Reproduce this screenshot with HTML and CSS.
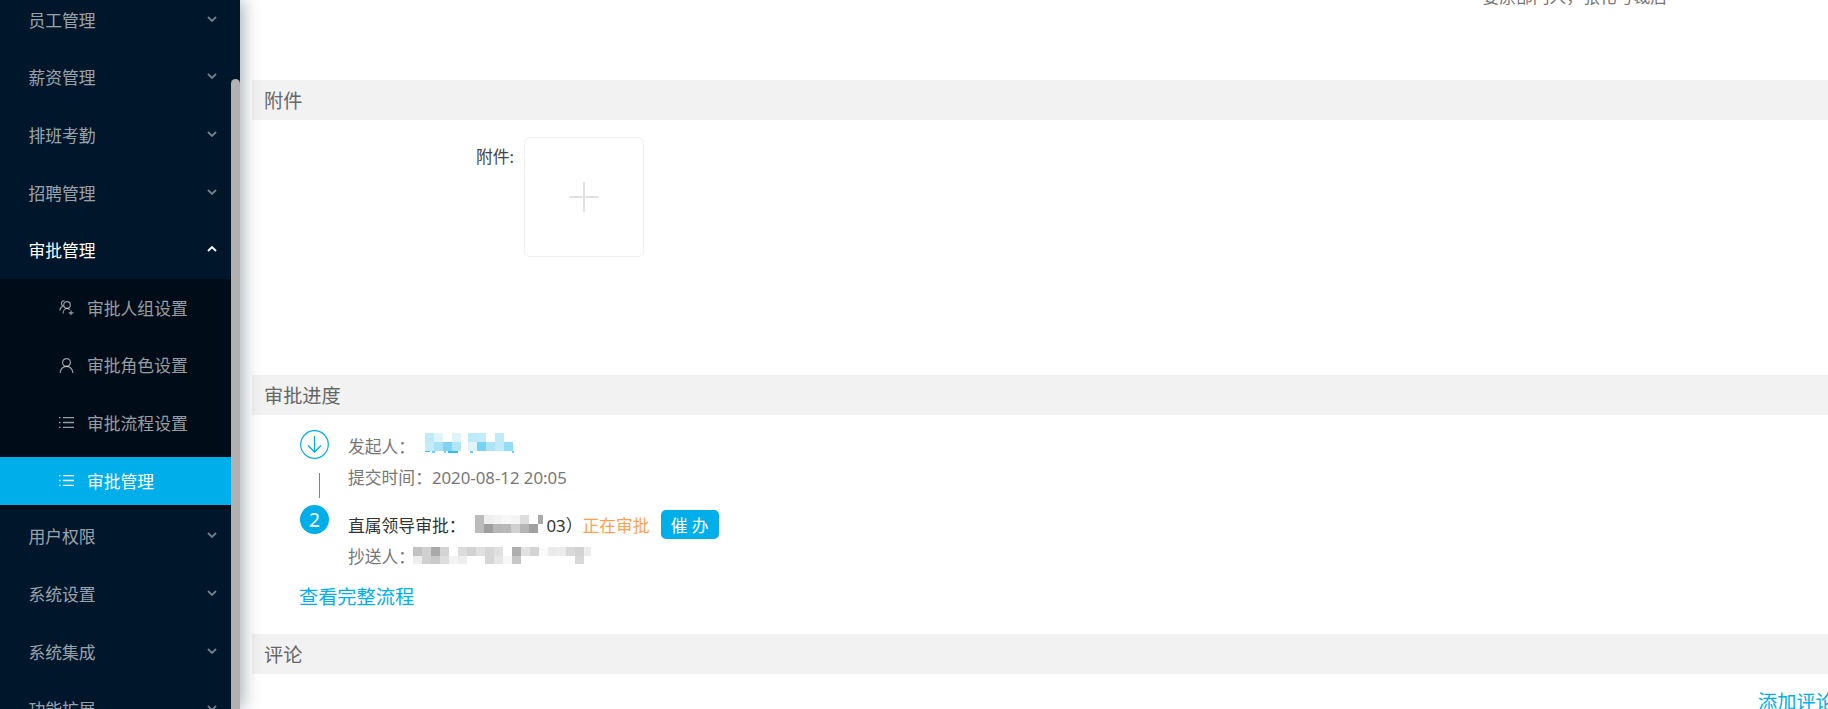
FILE: index.html
```html
<!DOCTYPE html>
<html lang="zh-CN">
<head>
  <meta charset="UTF-8">
  <meta name="viewport" content="width=device-width, initial-scale=1.0">
  <title>审批管理</title>
  <link rel="stylesheet" href="styles.css">
</head>
<body>
  <svg class="icon-defs" width="0" height="0">
    <symbol id="ic-chevron" viewBox="0 0 10 6"><path d="M1 1l4 4 4-4" fill="none" stroke="currentColor" stroke-width="1.8"/></symbol>
    <symbol id="ic-list" viewBox="0 0 14 14"><path d="M0 2.5h1.4M0 7h1.4M0 11.5h1.4M3.6 2.5H14M3.6 7H14M3.6 11.5H14" fill="none" stroke="currentColor" stroke-width="1.2"/></symbol>
    <symbol id="ic-user" viewBox="0 0 14 15"><g fill="none" stroke="currentColor" stroke-width="1.2"><circle cx="7" cy="4.5" r="3.9"/><path d="M.7 15c0-3.800 2.700-6.600 6.300-6.600s6.300 2.800 6.300 6.600"/></g></symbol>
    <symbol id="ic-group" viewBox="0 0 14 15"><g fill="none" stroke="currentColor" stroke-width="1.2"><circle cx="7.500" cy="5" r="3.300"/><path d="M5 .9C3.300.4 1.800 1.800 2 3.600c.1 1.200.6 1.900 1.200 2.400C1.500 7 .6 8.500.4 10.500M3.600 13.500c.1-2.700 1.700-5 3.900-5 1 0 2 .4 2.700 1.200M11.500 10.500v4.500M9.200 12.800h4.800"/></g></symbol>
  </svg>

  <div class="layout">
    <!-- Side menu -->
    <aside class="sidebar">
      <ul class="menu">
        <li class="menu-item">员工管理<svg class="chevron"><use href="#ic-chevron"/></svg></li>
        <li class="menu-item">薪资管理<svg class="chevron"><use href="#ic-chevron"/></svg></li>
        <li class="menu-item">排班考勤<svg class="chevron"><use href="#ic-chevron"/></svg></li>
        <li class="menu-item">招聘管理<svg class="chevron"><use href="#ic-chevron"/></svg></li>
        <li class="menu-item menu-open">审批管理<svg class="chevron chevron-up"><use href="#ic-chevron"/></svg></li>
        <li class="submenu">
          <ul>
            <li class="sub-item"><svg class="sub-icon"><use href="#ic-group"/></svg>审批人组设置</li>
            <li class="sub-item"><svg class="sub-icon"><use href="#ic-user"/></svg>审批角色设置</li>
            <li class="sub-item"><svg class="sub-icon"><use href="#ic-list"/></svg>审批流程设置</li>
            <li class="sub-item sub-active"><svg class="sub-icon"><use href="#ic-list"/></svg>审批管理</li>
          </ul>
        </li>
        <li class="menu-item">用户权限<svg class="chevron"><use href="#ic-chevron"/></svg></li>
        <li class="menu-item">系统设置<svg class="chevron"><use href="#ic-chevron"/></svg></li>
        <li class="menu-item">系统集成<svg class="chevron"><use href="#ic-chevron"/></svg></li>
        <li class="menu-item">功能扩展<svg class="chevron"><use href="#ic-chevron"/></svg></li>
      </ul>
      <div class="scroll-thumb"></div>
    </aside>

    <main class="content">
      <div class="top-note"><p>要原部门人，张化号裁后</p></div>

      <h2 class="section-title">附件</h2>
      <div class="attach-row">
        <label class="attach-label">附件:</label>
        <div class="upload-box">
          <svg width="30" height="30" viewBox="0 0 30 30"><path d="M15 0v30M0 15h30" stroke="#e1e1e1" stroke-width="2"/></svg>
        </div>
      </div>

      <h2 class="section-title">审批进度</h2>
      <div class="progress">
        <div class="step step-first">
          <div class="step-marker">
            <svg class="step-done" width="29" height="29" viewBox="0 0 29 29">
              <circle cx="14.500" cy="14.500" r="13.800" fill="none" stroke="#00aeea" stroke-width="1.200"/>
              <path d="M14.500 6v16M8 15.500l6.500 6.500 6.500-6.500" fill="none" stroke="#00aeea" stroke-width="1.300"/>
            </svg>
            <div class="step-line"></div>
          </div>
          <div class="step-body">
            <p class="step-text">发起人：<svg class="mosaic mosaic-name" width="89" height="20" viewBox="0 0 89 20" shape-rendering="crispEdges">
                <rect x="0" width="9" height="9" fill="#bfeaf8"/><rect x="9" width="9" height="9" fill="#e0f4fb"/><rect x="27" width="9" height="9" fill="#dff3fb"/>
                <rect x="43" width="9" height="9" fill="#bceaf8"/><rect x="52" width="9" height="9" fill="#c4ecf9"/><rect x="70" width="9" height="9" fill="#bfeaf8"/>
                <rect x="0" y="9" width="9" height="9" fill="#c5eafa"/><rect x="9" y="9" width="9" height="9" fill="#a8e2f6"/><rect x="18" y="9" width="9" height="9" fill="#7fd4f3"/><rect x="27" y="9" width="9" height="9" fill="#b2e5f8"/>
                <rect x="43" y="9" width="9" height="9" fill="#e0f4fb"/><rect x="52" y="9" width="9" height="9" fill="#76d2f2"/><rect x="61" y="9" width="9" height="9" fill="#aee4f7"/><rect x="70" y="9" width="9" height="9" fill="#c0ebf9"/><rect x="79" y="9" width="9" height="9" fill="#92dcf5"/>
                <rect x="0" y="18" width="5" height="1" fill="#2dbdee"/><rect x="7" y="18" width="3" height="2" fill="#6fd0f2"/><rect x="19" y="18" width="2" height="2" fill="#6fd0f2"/><rect x="23" y="18" width="10" height="2" fill="#2dbdee"/><rect x="45" y="18" width="3" height="2" fill="#6fd0f2"/><rect x="87" y="18" width="2" height="2" fill="#6fd0f2"/>
              </svg></p>
            <p class="step-text">提交时间：2020-08-12 20:05</p>
          </div>
        </div>

        <div class="step">
          <div class="step-marker">
            <div class="step-num">2</div>
          </div>
          <div class="step-body step-body-current">
            <p class="step-text step-current">直属领导审批：<svg class="mosaic mosaic-leader" width="69" height="18" viewBox="0 0 69 18" shape-rendering="crispEdges">
                <rect x="0" width="9" height="9" fill="#bcbcbc"/><rect x="9" width="9" height="9" fill="#eee"/><rect x="18" width="9" height="9" fill="#f3f3f3"/><rect x="27" width="9" height="9" fill="#f8f8f8"/><rect x="36" width="9" height="9" fill="#f4f4f4"/><rect x="45" width="9" height="9" fill="#ddd"/><rect x="63" width="5" height="9" fill="#aaa"/>
                <rect x="0" y="9" width="9" height="9" fill="#bbb"/><rect x="9" y="9" width="9" height="9" fill="#9f9f9f"/><rect x="18" y="9" width="9" height="9" fill="#b7b7b7"/><rect x="27" y="9" width="9" height="9" fill="#b9b9b9"/><rect x="36" y="9" width="9" height="9" fill="#d0d0d0"/><rect x="45" y="9" width="9" height="9" fill="#b5b5b5"/><rect x="54" y="9" width="9" height="9" fill="#a0a0a0"/>
              </svg><span class="leader-tail">03）</span><span class="status">正在审批</span><button class="urge-btn" type="button">催 办</button></p>
            <p class="step-text">抄送人：<svg class="mosaic mosaic-cc" width="178" height="17" viewBox="0 0 178 17" shape-rendering="crispEdges">
                <rect x="0" width="9" height="9" fill="#c2c2c2"/><rect x="9" width="9" height="9" fill="#cfcfcf"/><rect x="18" width="9" height="9" fill="#aaa"/><rect x="27" width="9" height="9" fill="#d3d3d3"/><rect x="45" width="9" height="9" fill="#dcdcdc"/><rect x="54" width="9" height="9" fill="#d2d2d2"/><rect x="63" width="9" height="9" fill="#e0e0e0"/><rect x="72" width="9" height="9" fill="#d6d6d6"/><rect x="81" width="9" height="9" fill="#e0e0e0"/><rect x="99" width="9" height="9" fill="#aeaeae"/><rect x="108" width="9" height="9" fill="#e2e2e2"/><rect x="117" width="9" height="9" fill="#d4d4d4"/><rect x="126" width="9" height="9" fill="#fafafa"/><rect x="135" width="9" height="9" fill="#eaeaea"/><rect x="144" width="9" height="9" fill="#ececec"/><rect x="153" width="9" height="9" fill="#d8d8d8"/><rect x="162" width="9" height="9" fill="#d2d2d2"/><rect x="171" width="7" height="9" fill="#ececec"/>
                <rect x="0" y="9" width="9" height="8" fill="#eee"/><rect x="9" y="9" width="9" height="8" fill="#d0d0d0"/><rect x="18" y="9" width="9" height="8" fill="#c8c8c8"/><rect x="27" y="9" width="9" height="8" fill="#ddd"/><rect x="36" y="9" width="9" height="8" fill="#f2f2f2"/><rect x="45" y="9" width="9" height="8" fill="#eee"/><rect x="72" y="9" width="9" height="8" fill="#d6d6d6"/><rect x="81" y="9" width="9" height="8" fill="#e6e6e6"/><rect x="90" y="9" width="9" height="8" fill="#f7f7f7"/><rect x="99" y="9" width="9" height="8" fill="#c6c6c6"/><rect x="162" y="9" width="9" height="8" fill="#d8d8d8"/>
              </svg></p>
          </div>
        </div>

        <a class="full-flow" href="#">查看完整流程</a>
      </div>

      <h2 class="section-title">评论</h2>
      <div class="comment-row"><a class="add-comment" href="#">添加评论</a></div>
    </main>
  </div>
</body>
</html>
```

FILE: styles.css
```css
* {
  box-sizing: border-box;
}

html, body {
  margin: 0;
  height: 100%;
  overflow: hidden;
}

body {
  background-color: white;
  font-family: "Noto Sans", "Noto Sans CJK SC", sans-serif;
  font-size: 16.8px;
  color: #777;
}

ul, p, h2 {
  margin: 0;
  padding: 0;
  list-style: none;
}

.icon-defs {
  position: absolute;
}

.layout {
  display: flex;
  height: 709px;
  overflow: hidden;
}

/* Side menu */
.sidebar {
  position: relative;
  z-index: 1;
  flex: 0 0 240px;
  background-color: #00162b;
  box-shadow: 3px 0 16px rgba(0, 21, 41, 0.35);
  overflow: hidden;
}

.menu {
  margin-top: -3.2px;
}

.menu-item {
  display: flex;
  align-items: center;
  justify-content: space-between;
  height: 48px;
  margin-bottom: 9.6px;
  padding: 0 23px 0 28.5px;
  color: rgba(255, 255, 255, 0.62);
  line-height: 48px;
}

.menu-open {
  margin-bottom: 4px;
  color: white;
}

.chevron {
  width: 10px;
  height: 6px;
  margin-top: -4px;
  color: rgba(255, 255, 255, 0.45);
}

.chevron-up {
  color: white;
  transform: rotate(180deg);
}

.submenu {
  margin-bottom: 4.8px;
  padding: 4.6px 0 4px;
  background-color: #000c17;
}

.sub-item {
  display: flex;
  align-items: center;
  height: 48px;
  margin-bottom: 9.6px;
  padding-left: 59px;
  color: rgba(255, 255, 255, 0.6);
}

.sub-item:last-child {
  margin-bottom: 0;
}

.sub-active {
  background-color: #00aeea;
  color: white;
}

.sub-icon {
  flex: none;
  width: 15px;
  height: 15px;
  margin-right: 13px;
}

.scroll-thumb {
  position: absolute;
  top: 79px;
  right: 0;
  bottom: 0;
  width: 9px;
  background-color: #b1b1b1;
  border-radius: 5px 5px 0 0;
}

/* Main content */
.content {
  flex: 1;
  min-width: 0;
  padding-left: 12px;
}

.top-note {
  height: 80px;
  overflow: hidden;
}

.top-note p {
  margin-top: -12px;
  padding-right: 161px;
  text-align: right;
  line-height: 17px;
  color: #777;
}

.section-title {
  height: 40px;
  padding-left: 12px;
  background-color: #f2f2f2;
  font-size: 19.2px;
  font-weight: normal;
  line-height: 41px;
  color: #666;
}

.attach-row {
  display: flex;
  height: 255px;
  padding-top: 17px;
}

.attach-label {
  flex: 0 0 262px;
  margin-right: 10px;
  text-align: right;
  line-height: 40px;
  color: #444;
}

.upload-box {
  display: flex;
  align-items: center;
  justify-content: center;
  width: 120px;
  height: 120px;
  border: 1px solid #eeeeee;
  border-radius: 6px;
}

/* Approval progress */
.progress {
  height: 219px;
  padding: 15px 0 0 48px;
}

.step {
  display: flex;
}

.step-first {
  height: 75px;
}

.step-marker {
  display: flex;
  flex-direction: column;
  align-items: center;
  flex: 0 0 29px;
}

.step-done {
  display: block;
}

.step-line {
  width: 1px;
  height: 25px;
  margin: 14px 0 0 9px;
  background-color: #00aeea;
}

.step-num {
  width: 29px;
  height: 29px;
  border-radius: 50%;
  background-color: #00aeea;
  font-size: 19.2px;
  line-height: 29px;
  text-align: center;
  color: white;
}

.step-body {
  margin-left: 19px;
  padding-top: 0.5px;
}

.step-body-current {
  padding-top: 4px;
}

.step-text {
  display: flex;
  align-items: center;
  height: 31px;
  white-space: nowrap;
  color: #777;
}

.step-current {
  color: #333;
}

.mosaic {
  flex: none;
}

.mosaic-name {
  margin: -6px 0 0 10px;
}

.mosaic-leader {
  margin: -1px 0 0 10px;
}

.mosaic-cc {
  margin: 0 0 0 -2px;
}

.leader-tail {
  margin-left: 2px;
}

.status {
  color: #ff9f50;
}

.urge-btn {
  width: 58px;
  height: 29px;
  margin-left: 11px;
  padding: 0;
  border: none;
  border-radius: 5px;
  background-color: #00aeea;
  font: inherit;
  color: white;
}

.full-flow {
  display: block;
  margin: 10.5px 0 0 -1px;
  font-size: 19.2px;
  line-height: 30px;
  color: #00aeea;
  text-decoration: none;
}

/* Comments */
.comment-row {
  padding-top: 13px;
  margin-right: -6.8px;
  text-align: right;
}

.add-comment {
  font-size: 19.2px;
  line-height: 30px;
  color: #00aeea;
  text-decoration: none;
}
```
